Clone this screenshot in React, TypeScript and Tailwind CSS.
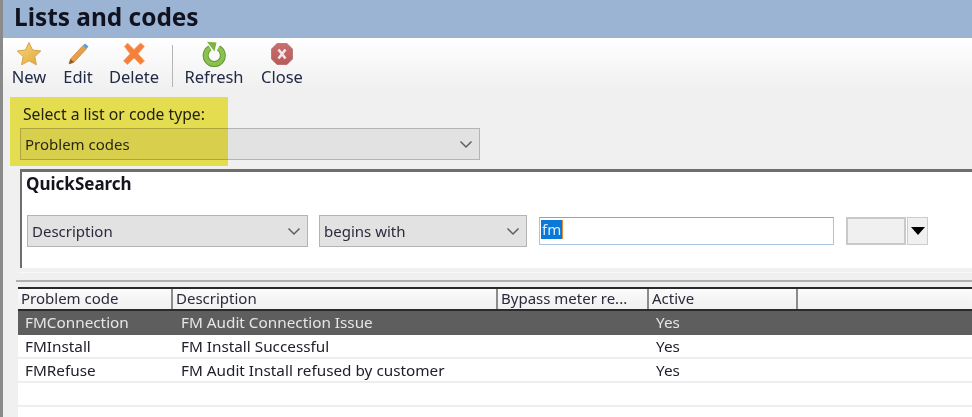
const font = "font-['Noto_Sans','Open_Sans',sans-serif]";

function Chevron() {
  return (
    <svg width="14" height="9" viewBox="0 0 14 9" className="shrink-0">
      <path d="M1.5 1.5 L7 7 L12.5 1.5" fill="none" stroke="#5f5f5f" strokeWidth="1.5" />
    </svg>
  );
}

function Star() {
  return (
    <svg width="26" height="26" viewBox="0 0 26 26">
      <defs>
        <linearGradient id="st" x1="0" y1="0" x2="1" y2="1">
          <stop offset="0" stopColor="#f6d976" />
          <stop offset="1" stopColor="#e2a53c" />
        </linearGradient>
      </defs>
      <path d="M13 1.5 L16.6 9 L24.8 10 L18.8 15.6 L20.4 23.8 L13 19.8 L5.6 23.8 L7.2 15.6 L1.2 10 L9.4 9 Z" fill="url(#st)" stroke="#d9a24a" strokeWidth="1" />
    </svg>
  );
}

function Pencil() {
  return (
    <svg width="24" height="26" viewBox="0 0 24 26">
      <path d="M3 23 L4.5 18 L17 4.5 L20.5 7.8 L8 21.2 Z" fill="#e6a04a" stroke="#c97f33" strokeWidth="0.7" />
      <path d="M17 4.5 L19 2.4 L22.5 5.6 L20.5 7.8 Z" fill="#5b9bd8" />
      <path d="M3 23 L4.5 18 L8 21.2 Z" fill="#8a5a2a" />
    </svg>
  );
}

function Cross() {
  return (
    <svg width="26" height="26" viewBox="0 0 26 26">
      <path d="M3.5 5.5 L6.5 2 L13 8.5 L19.5 2 L23.5 5.5 L17 12.8 L23.5 20 L19.5 23.5 L13 17 L6.5 23.5 L2.5 20 L9 12.8 Z" fill="#f5803a" stroke="#f4a26e" strokeWidth="0.8" />
    </svg>
  );
}

function RefreshIcon() {
  return (
    <svg width="26" height="26" viewBox="0 0 26 26">
      <path d="M9 7 A8.6 8.6 0 1 0 17.5 7" fill="none" stroke="#5f9a2e" strokeWidth="6" />
      <path d="M9 7 A8.6 8.6 0 1 0 17.5 7" fill="none" stroke="#8cc152" strokeWidth="4" />
      <path d="M6 0.8 L15.5 1.5 L13.5 10.5 Z" fill="#7cb342" />
    </svg>
  );
}

function CloseIcon() {
  return (
    <svg width="24" height="24" viewBox="0 0 24 24">
      <defs>
        <linearGradient id="cl" x1="0" y1="0" x2="0" y2="1">
          <stop offset="0" stopColor="#c96f6f" />
          <stop offset="1" stopColor="#b75a5a" />
        </linearGradient>
      </defs>
      <path d="M7 1.5 H17 L22.5 7 V17 L17 22.5 H7 L1.5 17 V7 Z" fill="url(#cl)" stroke="#a85555" strokeWidth="0.6" />
      <path d="M8.5 7.5 L15.5 16.5 M15.5 7.5 L8.5 16.5" stroke="#f4e6e6" strokeWidth="2.6" />
    </svg>
  );
}

function Tool({ icon, label, w }: { icon: React.ReactNode; label: string; w: string }) {
  return (
    <div className={`flex flex-col items-center ${w}`}>
      <div className="h-[26px] flex items-center justify-center">{icon}</div>
      <span className="text-[16.5px] leading-[20px] text-[#222a44] whitespace-nowrap">{label}</span>
    </div>
  );
}

function Select({ label, w, ml }: { label: string; w: string; ml?: string }) {
  return (
    <div className={`h-[32px] ${w} ${ml ?? ""} bg-[#e2e2e2] border border-[#b4b4b4] flex items-center justify-between pl-[4px] pr-[6px] text-[15px] text-[#2a2a3c]`}>
      <span>{label}</span>
      <Chevron />
    </div>
  );
}

const cols = ["w-[155px]", "w-[325px]", "w-[151px]", "w-[149px]", "flex-1"];
const headers = ["Problem code", "Description", "Bypass meter re...", "Active", ""];
const rows = [
  ["FMConnection", "FM Audit Connection Issue", "Yes"],
  ["FMInstall", "FM Install Successful", "Yes"],
  ["FMRefuse", "FM Audit Install refused by customer", "Yes"],
];

function Row({ r, sel }: { r: string[]; sel?: boolean }) {
  return (
    <div className={`h-[24px] flex items-center text-[15.3px] border-b-2 ${sel ? "bg-[#5e5e5e] text-[#e6e6e6] border-[#5e5e5e]" : "text-[#20202c] border-[#eeeeee]"}`}>
      <span className="w-[163px] pl-[7px]">{r[0]}</span>
      <span className="w-[475px]">{r[1]}</span>
      <span>{r[2]}</span>
    </div>
  );
}

export default function App() {
  return (
    <div className={`${font} relative w-[972px] h-[417px] overflow-hidden bg-[#f0f0f0] border-l-[3px] border-[#8a8a8a]`}>
      <div className="h-[38px] bg-[#9cb4d3] pl-[11px] flex items-center">
        <h1 className="text-[24.4px] font-bold leading-none text-[#10131f] -mt-[3px]">Lists and codes</h1>
      </div>

      <div className="h-[51px] bg-gradient-to-b from-white to-[#f0f0f0] flex items-start pl-[6px] pt-[3px]">
        <Tool icon={<Star />} label="New" w="w-[40px]" />
        <Tool icon={<Pencil />} label="Edit" w="w-[36px] ml-[11px]" />
        <Tool icon={<Cross />} label="Delete" w="w-[52px] ml-[12px]" />
        <div className="w-[1px] h-[42px] bg-[#b5b5b5] ml-[12px] mt-[4px]" />
        <Tool icon={<RefreshIcon />} label="Refresh" w="w-[60px] ml-[11px]" />
        <Tool icon={<CloseIcon />} label="Close" w="w-[46px] ml-[15px]" />
      </div>

      <div className="pl-[17px]">
        <div className="pl-[3px] pt-[15px] h-[39px] text-[15.7px] leading-[20px] text-[#24242c]">Select a list or code type:</div>
        <Select label="Problem codes" w="w-[460px]" />
      </div>

      <div className="ml-[17px] mt-[9px] h-[99px] bg-white border-t-[3px] border-l-[2px] border-[#6e6e6e]">
        <div className="pl-[4px] pt-[2px] text-[17px] leading-[20px] font-bold text-[#14141e]">QuickSearch</div>
        <div className="flex items-center mt-[21px] pl-[5px]">
          <Select label="Description" w="w-[281px]" />
          <Select label="begins with" w="w-[208px]" ml="ml-[11px]" />
          <div className="ml-[12px] w-[295px] h-[28px] border border-[#a9c6e2] border-t-[#7fa8cf] bg-white flex items-start pl-[1px] pt-[2px]">
            <span className="bg-[#0a78d7] text-[#d8ecff] text-[15px] leading-[19px] px-[1px] border-r border-[#e8863a]">fm</span>
          </div>
          <div className="ml-[12px] w-[60px] h-[28px] bg-[#f0f0f0] border-2 border-[#c9c9c9]" />
          <div className="ml-[1px] w-[21px] h-[28px] bg-[#f0f0f0] border border-[#cccccc] flex items-center justify-center">
            <svg width="14" height="8" viewBox="0 0 14 8"><path d="M0 0 H14 L7 8 Z" fill="#000" /></svg>
          </div>
        </div>
      </div>

      <div className="mt-[2px] ml-[15px] h-[3px] border-b border-[#f8f8f8]" />
      <div className="mt-[7px] ml-[13px] h-[2px] bg-[#b0b0b0]" />

      <div className="ml-[15px] mt-[5px] bg-white h-[131px]">
        <div className="h-[24px] flex bg-gradient-to-b from-[#fbfbfb] to-[#f0f0f0] border-y-2 border-[#2a2a2a] text-[15px] text-[#2a2a3c]">
          {headers.map((h, i) => (
            <div key={i} className={`${cols[i]} pl-[3px] leading-[19px] border-r-2 border-[#8c8c8c] last:border-r-0 whitespace-nowrap overflow-hidden`}>{h}</div>
          ))}
        </div>
        <Row r={rows[0]} sel />
        <Row r={rows[1]} />
        <Row r={rows[2]} />
        <div className="h-[24px] border-b-2 border-[#eeeeee]" />
      </div>

      <div className="absolute left-[7px] top-[97px] w-[218px] h-[69px] bg-[#f2e62a] opacity-80 mix-blend-multiply" />
    </div>
  );
}
